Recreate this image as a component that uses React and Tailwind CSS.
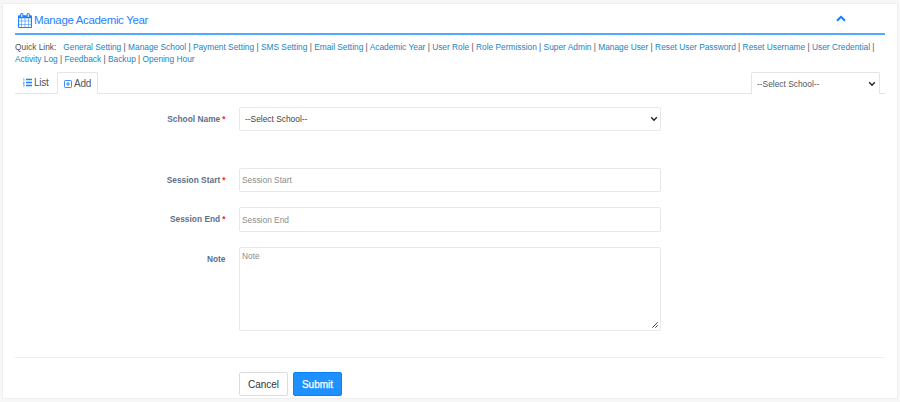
import React from "react";

const LINKS_TOP = [
  "General Setting", "Manage School", "Payment Setting", "SMS Setting", "Email Setting",
  "Academic Year", "User Role", "Role Permission", "Super Admin", "Manage User",
  "Reset User Password", "Reset Username", "User Credential",
];
const LINKS_BOTTOM = ["Activity Log", "Feedback", "Backup", "Opening Hour"];

function CalendarIcon() {
  return (
    <svg viewBox="64 0 1664 1792" preserveAspectRatio="none" className="h-[15px] w-[14px] shrink-0" fill="#1f80ff">
      <path d="M192 1664h288v-288h-288v288zm352 0h320v-288h-320v288zm-352-352h288v-320h-288v320zm352 0h320v-320h-320v320zm-352-384h288v-288h-288v288zm736 736h320v-288h-320v288zm-384-736h320v-288h-320v288zm768 736h288v-288h-288v288zm-384-352h320v-320h-320v320zm-352-864v-288q0-13-9.5-22.5t-22.5-9.5h-64q-13 0-22.5 9.5t-9.5 22.5v288q0 13 9.5 22.5t22.5 9.5h64q13 0 22.5-9.5t9.5-22.5zm736 864h288v-320h-288v320zm-384-384h320v-288h-320v288zm384 0h288v-288h-288v288zm32-480v-288q0-13-9.5-22.5t-22.5-9.5h-64q-13 0-22.5 9.5t-9.5 22.5v288q0 13 9.5 22.5t22.5 9.5h64q13 0 22.5-9.5t9.5-22.5zm384-64v1280q0 52-38 90t-90 38h-1408q-52 0-90-38t-38-90v-1280q0-52 38-90t90-38h128v-96q0-66 47-113t113-47h64q66 0 113 47t47 113v96h384v-96q0-66 47-113t113-47h64q66 0 113 47t47 113v96h128q52 0 90 38t38 90z" />
    </svg>
  );
}

function Chevron({ className }) {
  return (
    <svg viewBox="0 0 8 6" className={className} fill="none" stroke="currentColor" strokeWidth="1.4">
      <path d="M1.2 1.3 4 4.2 6.8 1.3" />
    </svg>
  );
}

function Row({ label, required, children, className = "" }) {
  return (
    <div className={`flex items-start ${className}`}>
      <div className="w-[210.5px] pt-[6px] text-right text-[8.3px] leading-[12px] font-bold tracking-[0.04px] whitespace-nowrap text-[#5b6f8c]">
        {label}
        {required && <span className="ml-[2px] text-[#ff2020]">*</span>}
      </div>
      <div className="ml-[13.5px] w-[421.5px]">{children}</div>
    </div>
  );
}

const FIELD = "block w-full rounded-[2px] border border-[#e7e8ea] bg-white text-[8.4px] leading-[12px]";

export default function App() {
  return (
    <div className="h-[402px] w-[900px] overflow-hidden bg-[#f7f7f7] pt-[3px] pl-[2px] font-['Liberation_Sans',Arial,sans-serif]">
      <main className="h-[396px] w-[896px] border border-[#eeeff0] bg-white pr-[12px] pl-[12px]">
        <header className="flex h-[31px] items-start justify-between border-b-2 border-[#52a9ff]">
          <h1 className="flex items-center gap-[2px] pt-[7px] pl-[3px] text-[11.5px] leading-[17px] tracking-[-0.34px] whitespace-nowrap text-[#2582ff]">
            <CalendarIcon />
            <span className="pt-[1px]">Manage Academic Year</span>
          </h1>
          <svg viewBox="0 0 10 7" className="mt-[11px] mr-[39px] h-[7px] w-[10px]" fill="none" stroke="#0b7bff" strokeWidth="2">
            <path d="M1 5.7 5 1.8 9 5.7" />
          </svg>
        </header>

        <nav className="h-[37px] pt-[6px] text-[8.35px] leading-[12px] text-[#4f5257]">
          <div className="whitespace-nowrap">
            <span className="mr-[7px]">Quick Link:</span>
            {LINKS_TOP.map((l) => (
              <React.Fragment key={l}><a className="text-[#2583c1]">{l}</a> | </React.Fragment>
            ))}
          </div>
          <div className="whitespace-nowrap">
            {LINKS_BOTTOM.map((l, i) => (
              <React.Fragment key={l}>{i > 0 && " | "}<a className="text-[#2583c1]">{l}</a></React.Fragment>
            ))}
          </div>
        </nav>

        <div className="flex h-[22px] items-stretch text-[10px] leading-[12px] tracking-[-0.25px] text-[#50555c]">
          <div className="flex w-[42px] items-center gap-[2px] border-b border-[#e4e5e7] pl-[8px]">
            <svg viewBox="0 0 9 9" className="h-[9px] w-[9px]" stroke="#1f80ff" fill="none">
              <path d="M3 1.5h6M3 4.5h6M3 7.5h6" strokeWidth="1.4" />
              <path d="M.2.8h.8v2.2M.2 3.9h1v.8l-1 .8h1.2M.2 6.6h1v1.7h-1" strokeWidth=".6" />
            </svg>
            <span>List</span>
          </div>
          <div className="flex w-[41px] items-center gap-[2px] rounded-t-[2px] border border-b-0 border-[#e4e5e7] pl-[6px]">
            <svg viewBox="0 0 8 8" className="h-[8px] w-[8px]" fill="none" stroke="#1f80ff" strokeWidth=".9">
              <rect x=".5" y=".5" width="7" height="7" rx=".8" />
              <path d="M2 4h4M4 2v4" />
            </svg>
            <span>Add</span>
          </div>
          <div className="flex-1 border-b border-[#e4e5e7]" />
          <div className="flex w-[129px] items-center justify-between rounded-t-[2px] border border-b-0 border-[#e4e5e7] pr-[3px] pl-[5px] text-[8.4px] tracking-normal">
            <span>--Select School--</span>
            <Chevron className="h-[6px] w-[8px] text-[#222]" />
          </div>
          <div className="w-[5px] border-b border-[#e4e5e7]" />
        </div>

        <form className="pt-[13px]">
          <Row label="School Name" required className="h-[61px]">
            <div className={`${FIELD} flex h-[24px] items-center justify-between pr-[2px] pl-[5px] text-[#444]`}>
              <span>--Select School--</span>
              <Chevron className="h-[6px] w-[8px] text-[#222]" />
            </div>
          </Row>
          <Row label="Session Start" required className="h-[39px]">
            <input className={`${FIELD} h-[24px] px-[2px] placeholder:text-[#8c8c8c]`} placeholder="Session Start" />
          </Row>
          <Row label="Session End" required className="h-[40px]">
            <input className={`${FIELD} h-[25px] px-[2px] placeholder:text-[#8c8c8c]`} placeholder="Session End" />
          </Row>
          <Row label="Note" className="h-[110px]">
            <div className={`${FIELD} flex h-[84px] flex-col justify-between px-[2px] pt-[2px] pb-[2px] text-[#8c8c8c]`}>
              <span>Note</span>
              <svg viewBox="0 0 6 6" className="h-[6px] w-[6px] self-end" stroke="#333" strokeWidth=".9">
                <path d="M.3 5.7 5.7.3M3.3 5.7 5.7 3.3" />
              </svg>
            </div>
          </Row>
          <div className="flex gap-[5px] border-t border-[#eeeeee] pt-[14px] pl-[224px] text-[10px]">
            <button type="button" className="h-[24px] w-[49px] rounded-[2px] border border-[#dcdcdc] bg-white text-[#333]">Cancel</button>
            <button type="button" className="h-[24px] w-[49px] rounded-[2px] border border-[#0a80ff] bg-[#1e90ff] text-white [-webkit-text-stroke:0.25px_white]">Submit</button>
          </div>
        </form>
      </main>
    </div>
  );
}
